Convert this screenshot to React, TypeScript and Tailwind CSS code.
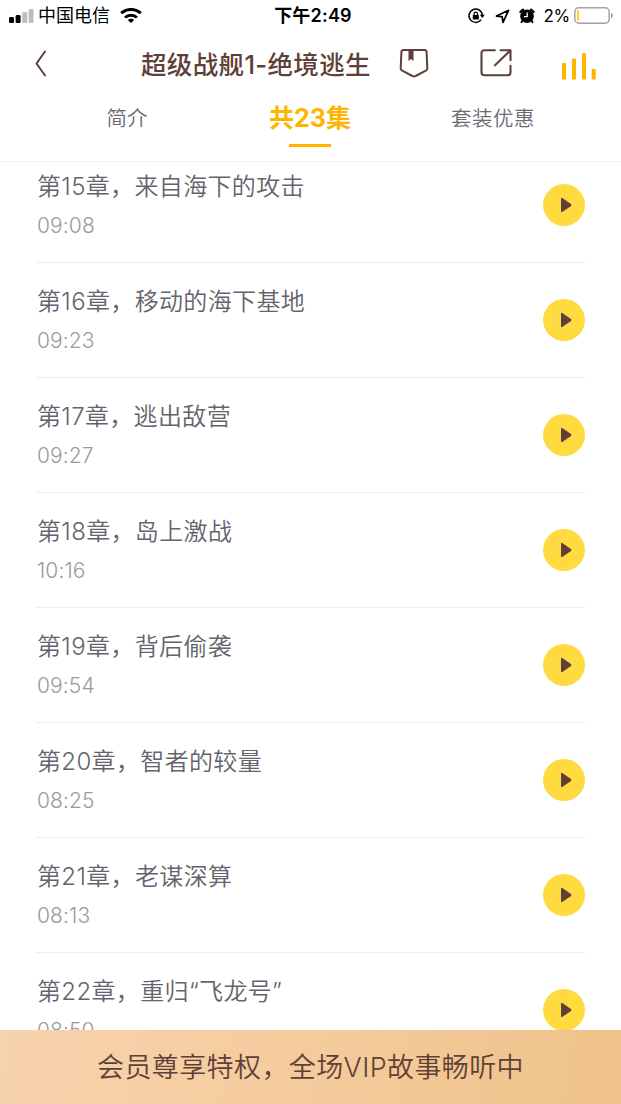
interface Chapter {
  title: string;
  duration: string;
}

const CHAPTERS: Chapter[] = [
  { title: "第15章，来自海下的攻击", duration: "09:08" },
  { title: "第16章，移动的海下基地", duration: "09:23" },
  { title: "第17章，逃出敌营", duration: "09:27" },
  { title: "第18章，岛上激战", duration: "10:16" },
  { title: "第19章，背后偷袭", duration: "09:54" },
  { title: "第20章，智者的较量", duration: "08:25" },
  { title: "第21章，老谋深算", duration: "08:13" },
  { title: "第22章，重归“飞龙号”", duration: "08:50" },
];

function StatusBar() {
  return (
    <div className="grid h-8 grid-cols-[1fr_auto_1fr] items-center pl-[9px] pr-[7px] text-[17px] leading-8 text-black">
      <div className="flex items-center">
        <svg width="25" height="16" viewBox="0 0 25 16">
          <rect x="0" y="9" width="5" height="6" rx="1.3" />
          <rect x="6.6" y="7" width="5" height="8" rx="1.3" />
          <rect x="13.2" y="4" width="5" height="11" rx="1.3" fill="#bfbfbf" />
          <rect x="19.6" y="1" width="5" height="14" rx="1.3" fill="#bfbfbf" />
        </svg>
        <span className="ml-[4px] text-[18px]">中国电信</span>
        <svg className="ml-[10px]" width="22" height="16" viewBox="0 0 22 16" fill="none" stroke="#000" strokeWidth="3">
          <path d="M1.2 5.2C6.8.2 15.2.2 20.8 5.2" />
          <path d="M5 9.5c3.300-3 8.700-3 12 0" />
          <path d="M11 15l-3.200-3c1.700-1.600 4.700-1.600 6.400 0z" fill="#000" stroke="none" />
        </svg>
      </div>
      <span className="pl-[3px] text-[18px] font-semibold tracking-[0.2px]">下午2:49</span>
      <div className="flex items-center justify-end">
        {/* Rotation lock */}
        <svg width="17" height="16" viewBox="0 0 17 16" fill="none" stroke="#000" strokeWidth="1.5">
          <path d="M13.2 11.6A6.7 6.7 0 1 1 14.4 7.2" />
          <path d="M11.8 6.8h5l-2.5 3.2z" fill="#000" stroke="none" />
          <rect x="4.8" y="7" width="6" height="4.6" rx=".5" fill="#000" stroke="none" />
          <path d="M6.1 7.2V5.8a1.7 1.7 0 0 1 3.4 0v1.4" strokeWidth="1.2" />
        </svg>
        <svg className="ml-[10px]" width="15" height="15" viewBox="0 0 15 15" fill="none" stroke="#000" strokeWidth="1.8" strokeLinejoin="round">
          <path d="M13.5 1.3 1.500 7l5.600.7.900 5.700z" />
        </svg>
        {/* Alarm clock */}
        <svg className="ml-[9px]" width="16" height="16" viewBox="0 0 16 16">
          <circle cx="8" cy="8.3" r="6.8" />
          <path d="M3.2 13l-.8 1.300M12.800 13l.8 1.300" stroke="#000" strokeWidth="1.8" strokeLinecap="round" />
          <path d="M1.500 3.800 4 1.700M14.500 3.800 12 1.700" fill="none" stroke="#000" strokeWidth="2.4" strokeLinecap="round" />
          <path d="M8.200 4.500v4.200H5" fill="none" stroke="#fff" strokeWidth="1.3" />
        </svg>
        <span className="ml-[9px] tracking-[-0.3px]">2%</span>
        <svg className="ml-[4px]" width="40" height="18" viewBox="0 0 40 18">
          <rect x=".8" y=".8" width="34.400" height="15.400" rx="4" fill="none" stroke="#a3a3a3" strokeWidth="1.5" />
          <path d="M5 3v11c-1.600 0-2-.8-2-2V5c0-1.200.4-2 2-2z" fill="#ffd02f" />
          <path d="M37 5.800c2.600 1 2.600 4.400 0 5.400z" fill="#a3a3a3" />
        </svg>
      </div>
    </div>
  );
}

function TitleBar() {
  return (
    <div className="flex h-[64px] items-center pl-[34px] pr-[24px] text-[#5f3f37]">
      <svg className="-mt-[2px]" width="14" height="28" viewBox="0 0 14 28" fill="none" stroke="currentColor" strokeWidth="2" strokeLinecap="round" strokeLinejoin="round">
        <path d="M11 2.5 2.5 14.5 11 26.5" />
      </svg>
      <h1 className="ml-[93px] mt-[2px] w-[232px] whitespace-nowrap text-[25.5px] font-medium leading-[36px] tracking-[0.35px]">
        超级战舰1-绝境逃生
      </h1>
      {/* Bookmark badge */}
      <svg className="-mt-[2px] ml-[26px] shrink-0" width="30" height="30" viewBox="0 0 30 30" fill="none" stroke="currentColor" strokeWidth="2" strokeLinejoin="round">
        <path d="M4.5 2h21q2 0 2.1 2l.7 16q.1 1.8-1.5 2.700L16.600 28q-1.600.9-3.200 0L3.200 22.700q-1.600-.9-1.500-2.700l.7-16Q2.500 2 4.500 2z" />
        <path d="M9.5 2h5v11L12 11l-2.500 2z" fill="currentColor" stroke="none" />
      </svg>
      {/* Share */}
      <svg className="-mt-[2px] ml-[51px] shrink-0" width="32" height="30" viewBox="0 0 32 30" fill="none" stroke="currentColor" strokeWidth="2.1" strokeLinecap="round" strokeLinejoin="round">
        <path d="M14.8 2.300H4.500q-3 0-3 3v19q0 3 3 3h23q3 0 3-3v-6.600" />
        <path d="M20.500 2.300h10v10M30 2.800 15 17.300" />
      </svg>
      {/* Now playing */}
      <svg className="ml-[50px] mt-1 shrink-0" width="35" height="28" viewBox="0 0 35 28" fill="#ffb400">
        <rect x="0" y="11" width="4" height="16.5" rx=".6" />
        <rect x="10" y="6.5" width="4" height="21" rx=".6" />
        <rect x="20" y="1" width="4" height="26.5" rx=".6" />
        <rect x="29.7" y="17" width="4" height="10.5" rx=".6" />
      </svg>
    </div>
  );
}

function Tabs() {
  return (
    <nav className="flex h-[65px] whitespace-nowrap text-[20.5px] font-[350] leading-[44px] text-[#6b6a72]">
      <button className="ml-[106px] h-[44px] w-[42px] leading-[45px]">简介</button>
      <button className="ml-[120px] flex w-[84px] flex-col items-center text-[25px] font-bold leading-[44px] text-[#ffb400]">
        共23集
        <span className="mt-[4px] h-[3px] w-[42px] bg-[#ffb400]" />
      </button>
      <button className="ml-[98px] h-[44px] w-[86px] leading-[45px] tracking-[0.5px]">套装优惠</button>
    </nav>
  );
}

function ChapterRow({ title, duration }: Chapter) {
  return (
    <li className="mx-[36px] flex h-[115px] items-center justify-between border-b border-[#ededed]">
      <div className="whitespace-nowrap pl-px font-[350]">
        <p className="text-[24px] leading-[32px] tracking-[0.35px] text-[#64636c]">{title}</p>
        <p className="mt-[9px] text-[21px] leading-[28px] tracking-[0.1px] text-[#9b9aa0]">{duration}</p>
      </div>
      <button className="flex h-[42px] w-[42px] items-center justify-center rounded-full bg-[#ffdb40]">
        <svg className="ml-[3px]" width="12" height="16" viewBox="0 0 12 16" fill="#5f3f37">
          <path d="M1 2.2Q1 0 3 1.4l7.6 5.400q1.600 1.200 0 2.400L3 14.600Q1 16 1 13.800z" />
        </svg>
      </button>
    </li>
  );
}

export default function App() {
  return (
    <div className="flex h-[1104px] w-[621px] flex-col overflow-hidden bg-white font-['Inter','Noto_Sans_CJK_SC',sans-serif]">
      <header className="h-[162px] shrink-0 border-b border-[#f2f2f2]">
        <StatusBar />
        <TitleBar />
        <Tabs />
      </header>
      <main className="h-[868px] shrink-0 overflow-hidden">
        {/* List is scrolled slightly under the header */}
        <ul className="-mt-[14px]">
          {CHAPTERS.map((chapter) => (
            <ChapterRow key={chapter.title} {...chapter} />
          ))}
        </ul>
      </main>
      <footer className="flex h-[74px] shrink-0 items-center justify-center bg-linear-[100deg,#f7d3ad,#f4cb9c_50%,#efc28a] pt-[2px] text-[27px] font-[350] tracking-[0.4px] text-[#5f3f37]">
        会员尊享特权，全场VIP故事畅听中
      </footer>
    </div>
  );
}
